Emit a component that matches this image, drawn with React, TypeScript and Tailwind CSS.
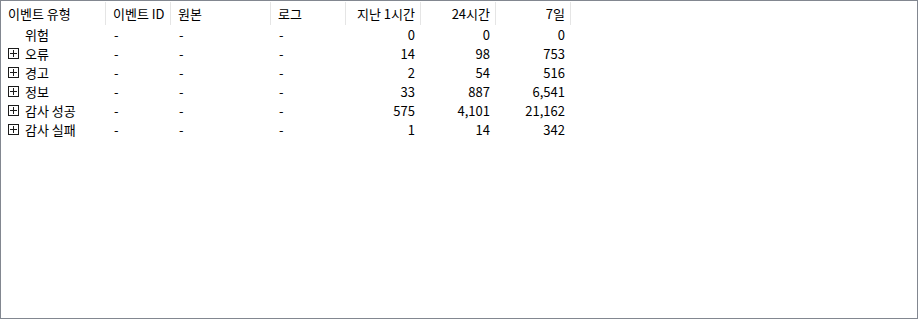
import React from "react";

const cols = [105, 65, 100, 75, 75, 75, 75];
const headers = ["이벤트 유형", "이벤트 ID", "원본", "로그", "지난 1시간", "24시간", "7일"];
const rows: { name: string; expand: boolean; v: string[] }[] = [
  { name: "위험", expand: false, v: ["0", "0", "0"] },
  { name: "오류", expand: true, v: ["14", "98", "753"] },
  { name: "경고", expand: true, v: ["2", "54", "516"] },
  { name: "정보", expand: true, v: ["33", "887", "6,541"] },
  { name: "감사 성공", expand: true, v: ["575", "4,101", "21,162"] },
  { name: "감사 실패", expand: true, v: ["1", "14", "342"] },
];

function Plus() {
  return (
    <svg width="11" height="11" viewBox="0 0 11 11" className="shrink-0">
      <rect x="0.5" y="0.5" width="10" height="10" fill="white" stroke="#1a1a1a" />
      <line x1="2" y1="5.5" x2="9" y2="5.5" stroke="#1a1a1a" />
      <line x1="5.5" y1="2" x2="5.5" y2="9" stroke="#1a1a1a" />
    </svg>
  );
}

export default function App() {
  return (
    <div
      className="w-[918px] h-[319px] bg-white border border-[#828790] text-black text-[13px] overflow-hidden"
      style={{ fontFamily: '"Noto Sans CJK KR", "Noto Sans", sans-serif' }}
    >
      <div className="flex h-[24px]">
        {headers.map((h, i) => (
          <div
            key={i}
            style={{ width: cols[i] }}
            className={`flex items-center h-full leading-none relative ${
              i >= 4 ? "justify-end pr-[6px]" : "pl-[7px]"
            }`}
          >
            {h}
            <span className="absolute right-0 top-[1px] bottom-0 w-px bg-[#e5e5e5]" />
          </div>
        ))}
      </div>
      <div>
        {rows.map((r, ri) => (
          <div key={ri} className="flex h-[19px] items-center leading-none">
            <div style={{ width: cols[0] }} className="flex items-center pl-[7px] gap-[6px]">
              {r.expand ? <Plus /> : <span className="w-[11px] shrink-0" />}
              <span>{r.name}</span>
            </div>
            {[1, 2, 3].map((c) => (
              <div key={c} style={{ width: cols[c] }} className="pl-[8px]">
                -
              </div>
            ))}
            {r.v.map((v, vi) => (
              <div key={vi} style={{ width: cols[4 + vi] }} className="text-right pr-[6px]">
                {v}
              </div>
            ))}
          </div>
        ))}
      </div>
    </div>
  );
}
